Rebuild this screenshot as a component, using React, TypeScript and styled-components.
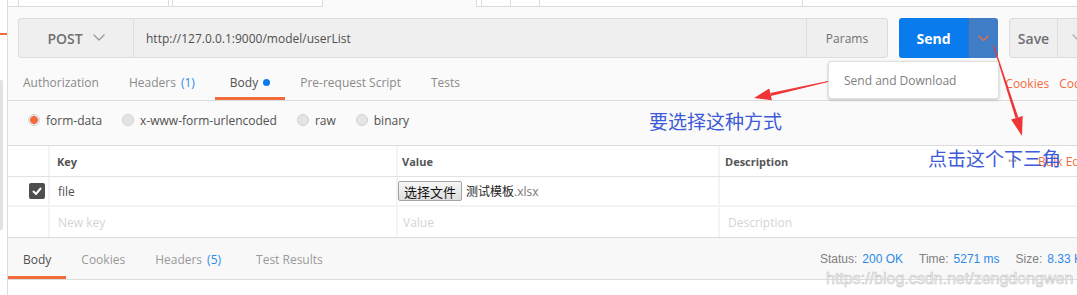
import styled, { createGlobalStyle } from "styled-components";

const ORANGE = "#f26b3a";
const BLUE = "#2b8ae8";
const LINE = "#dcdcdc";
const UI_FONT = `"Open Sans", "Noto Sans CJK SC", sans-serif`;
const CJK_FONT = `"Noto Sans CJK SC", "Noto Sans", sans-serif`;

const GlobalStyle = createGlobalStyle`
    html, body {
        margin: 0;
        padding: 0;
    }
    body {
        background: #fff;
        font-family: ${UI_FONT};
        font-size: 12px;
        color: #505050;
    }
    * {
        box-sizing: border-box;
    }
`;

const stripSegments = [
    { w: 11 },
    { w: 150 },
    { w: 4 },
    { w: 150 },
    { w: 154, active: true },
    { w: 5 },
    { w: 29 },
    { w: 29 },
    { w: 263 },
];

const requestTabs = [
    { label: "Authorization" },
    { label: "Headers", count: "(1)" },
    { label: "Body", active: true, dot: true },
    { label: "Pre-request Script" },
    { label: "Tests" },
];

const bodyModes = [
    { label: "form-data", checked: true },
    { label: "x-www-form-urlencoded" },
    { label: "raw" },
    { label: "binary" },
];

const responseTabs = [
    { label: "Body", active: true },
    { label: "Cookies" },
    { label: "Headers", count: "(5)" },
    { label: "Test Results" },
];

const stats = [
    { label: "Status:", value: "200 OK" },
    { label: "Time:", value: "5271 ms" },
    { label: "Size:", value: "8.33 KB" },
];

function Chevron({ color, size = 12 }: { color: string; size?: number }) {
    return (
        <svg width={size} height={size * 0.6} viewBox="0 0 12 7" fill="none">
            <polyline
                points="1,1 6,6 11,1"
                stroke={color}
                strokeWidth="1.4"
                strokeLinecap="round"
                strokeLinejoin="round"
            />
        </svg>
    );
}

export default function App() {
    return (
        <Page>
            <GlobalStyle />
            <Sidebar>
                <SideMark />
                <SideScroll />
            </Sidebar>
            <Main>
                <Strip>
                    {stripSegments.map((s, i) => (
                        <StripTab key={i} $w={s.w} $active={!!s.active} />
                    ))}
                    <StripFill />
                </Strip>

                <UrlRow>
                    <UrlGroup>
                        <Method>
                            <span>POST</span>
                            <Chevron color="#9a9a9a" />
                        </Method>
                        <UrlInput>http://127.0.0.1:9000/model/userList</UrlInput>
                        <Params>Params</Params>
                    </UrlGroup>
                    <SendGroup>
                        <SendButton>Send</SendButton>
                        <SendDrop>
                            <Chevron color={ORANGE} size={11} />
                        </SendDrop>
                        <Menu>Send and Download</Menu>
                    </SendGroup>
                    <SaveGroup>
                        <SaveButton>Save</SaveButton>
                        <SaveDrop>
                            <Chevron color="#b0b0b0" />
                        </SaveDrop>
                    </SaveGroup>
                </UrlRow>

                <TabsRow>
                    {requestTabs.map(t => (
                        <Tab key={t.label} $active={!!t.active}>
                            {t.label}
                            {t.count && <Count>{t.count}</Count>}
                            {t.dot && <Dot />}
                        </Tab>
                    ))}
                    <RightLinks>
                        <Link>Cookies</Link>
                        <Link>Code</Link>
                    </RightLinks>
                </TabsRow>

                <ModeRow>
                    {bodyModes.map(m => (
                        <Mode key={m.label}>
                            <Radio $checked={!!m.checked} />
                            {m.label}
                        </Mode>
                    ))}
                </ModeRow>

                <Table>
                    <Row $h={31} $line="#e2e2e2" $lineW={1}>
                        <Cell />
                        <Cell $sep $pad={7}><Head>Key</Head></Cell>
                        <Cell $sep $pad={4}><Head>Value</Head></Cell>
                        <Cell $sep $pad={5}>
                            <Head>Description</Head>
                            <HeadTools>
                                <Dots>•••</Dots>
                                <Link>Bulk Edit</Link>
                            </HeadTools>
                        </Cell>
                    </Row>
                    <Row $h={30} $line="#f3f3f3" $lineW={2}>
                        <CheckCell>
                            <CheckBox>
                                <svg width="10" height="8" viewBox="0 0 10 8">
                                    <polyline
                                        points="1,4 4,7 9,1"
                                        fill="none"
                                        stroke="#fff"
                                        strokeWidth="2"
                                    />
                                </svg>
                            </CheckBox>
                        </CheckCell>
                        <Cell $sep $pad={8}>file</Cell>
                        <Cell $sep $pad={0}>
                            <FileButton>选择文件</FileButton>
                            <FileName>
                                测试模板<Ext>.xlsx</Ext>
                            </FileName>
                        </Cell>
                        <Cell $sep $pad={8} />
                    </Row>
                    <Row $h={31} $line={LINE} $lineW={1}>
                        <Cell />
                        <Cell $sep $pad={8}><Placeholder>New key</Placeholder></Cell>
                        <Cell $sep $pad={5}><Placeholder>Value</Placeholder></Cell>
                        <Cell $sep $pad={8}><Placeholder>Description</Placeholder></Cell>
                    </Row>
                </Table>

                <ResponseRow>
                    {responseTabs.map(t => (
                        <RespTab key={t.label} $active={!!t.active}>
                            {t.label}
                            {t.count && <Count>{t.count}</Count>}
                        </RespTab>
                    ))}
                    <Stats>
                        {stats.map(s => (
                            <Stat key={s.label}>
                                {s.label}
                                <StatValue>{s.value}</StatValue>
                            </Stat>
                        ))}
                    </Stats>
                </ResponseRow>
                <Footer />
            </Main>

            <Arrows width="1077" height="295" viewBox="0 0 1077 295">
                <polygon
                    points="827.9,80.9 828.1,82.1 770.9,95.9 770.3,92.9"
                    fill="#ef3535"
                />
                <polygon points="754,98 769.3,88.5 771.9,100.3" fill="#ef3535" />
                <polygon
                    points="993,45.3 994,45 1018.3,117.3 1015.5,118.1"
                    fill="#ef3535"
                />
                <polygon points="1022,136 1011.1,119.4 1022.7,116" fill="#ef3535" />
            </Arrows>
            <Note $x={649} $y={111}>要选择这种方式</Note>
            <Note $x={928} $y={148}>点击这个下三角</Note>
            <Watermark>https://blog.csdn.net/zengdongwen</Watermark>
        </Page>
    );
}

const Page = styled.div`
    position: relative;
    display: flex;
    width: 1077px;
    height: 295px;
    overflow: hidden;
    background: #fff;
`;
const Sidebar = styled.div`
    flex: none;
    width: 8px;
    display: flex;
    flex-direction: column;
    border-right: 1px solid ${LINE};
    background: #fff;
`;
const SideMark = styled.div`
    margin-top: 33px;
    height: 2px;
    background: ${ORANGE};
`;
const SideScroll = styled.div`
    margin-top: 45px;
    width: 3px;
    height: 150px;
    border-radius: 0 2px 2px 0;
    background: #e2e2e2;
`;
const Main = styled.div`
    flex: 1;
    min-width: 0;
    display: flex;
    flex-direction: column;
    background: #fafafa;
`;
const Strip = styled.div`
    height: 18px;
    display: flex;
    align-items: flex-start;
`;
const StripTab = styled.div<{ $w: number; $active: boolean }>`
    flex: none;
    width: ${({ $w }) => $w}px;
    height: 7px;
    border-right: 1px solid ${LINE};
    ${({ $active }) =>
        $active
            ? `background: #fafafa;`
            : `background: #fff; border-bottom: 1px solid ${LINE};`}
`;
const StripFill = styled.div`
    flex: 1;
    height: 7px;
    background: #fff;
    border-bottom: 1px solid ${LINE};
`;
const UrlRow = styled.div`
    height: 40px;
    display: flex;
    padding-left: 10px;
`;
const UrlGroup = styled.div`
    flex: none;
    width: 870px;
    display: flex;
    border: 1px solid ${LINE};
    border-radius: 3px;
    background: #efefef;
`;
const Method = styled.div`
    flex: none;
    width: 115px;
    display: flex;
    align-items: center;
    justify-content: center;
    gap: 10px;
    border-right: 1px solid ${LINE};
    font-size: 14px;
    font-weight: 600;
    color: #707070;
`;
const UrlInput = styled.div`
    flex: 1;
    display: flex;
    align-items: center;
    padding-left: 12px;
    border-right: 1px solid ${LINE};
    font-size: 12px;
    color: #505050;
`;
const Params = styled.div`
    flex: none;
    width: 80px;
    display: flex;
    align-items: center;
    justify-content: center;
    font-size: 12px;
    color: #707070;
`;
const SendGroup = styled.div`
    position: relative;
    flex: none;
    margin-left: 11px;
    display: flex;
    border-radius: 3px;
    overflow: visible;
`;
const SendButton = styled.div`
    width: 69px;
    display: flex;
    align-items: center;
    justify-content: center;
    background: #097bed;
    border-radius: 3px 0 0 3px;
    font-size: 14px;
    font-weight: 700;
    color: #fff;
`;
const SendDrop = styled.div`
    width: 30px;
    display: flex;
    align-items: center;
    justify-content: center;
    background: #3f7dc7;
    border-left: 1px solid #3672b8;
    border-radius: 0 3px 3px 0;
`;
const Menu = styled.div`
    position: absolute;
    top: calc(100% + 3px);
    right: -1px;
    z-index: 2;
    width: 171px;
    height: 38px;
    display: flex;
    align-items: center;
    padding-left: 15px;
    background: #fff;
    border: 1px solid #e0e0e0;
    border-radius: 3px;
    box-shadow: 0 1px 3px rgba(0, 0, 0, 0.22);
    font-size: 12px;
    color: #808080;
    white-space: nowrap;
`;
const SaveGroup = styled.div`
    flex: none;
    width: 90px;
    margin-left: 11px;
    display: flex;
    border: 1px solid ${LINE};
    border-radius: 3px;
    background: #efefef;
`;
const SaveButton = styled.div`
    width: 48px;
    display: flex;
    align-items: center;
    justify-content: center;
    border-right: 1px solid ${LINE};
    font-size: 14px;
    font-weight: 600;
    color: #707070;
`;
const SaveDrop = styled.div`
    flex: 1;
    display: flex;
    align-items: center;
    justify-content: center;
`;
const TabsRow = styled.div`
    height: 43px;
    display: flex;
    border-bottom: 1px solid ${LINE};
`;
const Tab = styled.div<{ $active: boolean }>`
    height: 42px;
    display: flex;
    align-items: center;
    padding: 9px 15px 0;
    border-bottom: 3px solid ${({ $active }) => ($active ? ORANGE : "transparent")};
    font-size: 12px;
    color: ${({ $active }) => ($active ? "#505050" : "#8a8a8a")};
    white-space: nowrap;
`;
const Count = styled.span`
    margin-left: 5px;
    margin-right: 5px;
    color: ${BLUE};
`;
const Dot = styled.span`
    width: 7px;
    height: 7px;
    margin-left: 5px;
    border-radius: 50%;
    background: #097bed;
`;
const RightLinks = styled.div`
    margin-left: auto;
    margin-right: -11px;
    display: flex;
    align-items: center;
    gap: 10px;
    padding-top: 9px;
`;
const Link = styled.span`
    font-size: 12px;
    color: ${ORANGE};
    white-space: nowrap;
`;
const ModeRow = styled.div`
    height: 44px;
    display: flex;
    align-items: center;
    gap: 20px;
    padding: 0 0 6px 20px;
    background: #fafafa;
`;
const Mode = styled.label`
    display: flex;
    align-items: center;
    gap: 6px;
    font-size: 12px;
    color: #505050;
`;
const Radio = styled.span<{ $checked: boolean }>`
    width: 12px;
    height: 12px;
    border-radius: 50%;
    border: 1px solid #d2d2d2;
    background: ${({ $checked }) =>
        $checked
            ? `radial-gradient(circle, ${ORANGE} 0 3.6px, #ececec 4.2px)`
            : "#e4e4e4"};
`;
const Table = styled.div`
    display: flex;
    flex-direction: column;
    border-top: 1px solid ${LINE};
    background: #fff;
`;
const Row = styled.div<{ $h: number; $line: string; $lineW: number }>`
    height: ${({ $h }) => $h}px;
    display: grid;
    grid-template-columns: 40px 348px 322px 1fr;
    border-bottom: ${({ $lineW, $line }) => `${$lineW}px solid ${$line}`};
`;
const Cell = styled.div<{ $sep?: boolean; $pad?: number }>`
    display: flex;
    align-items: center;
    padding-left: ${({ $pad }) => $pad ?? 0}px;
    border-left: ${({ $sep }) => ($sep ? "2px solid #f4f4f4" : "none")};
    font-size: 12px;
    color: #505050;
    white-space: nowrap;
`;
const CheckCell = styled.div`
    display: flex;
    align-items: center;
    justify-content: flex-end;
    padding-right: 3px;
`;
const CheckBox = styled.span`
    width: 16px;
    height: 16px;
    display: flex;
    align-items: center;
    justify-content: center;
    border-radius: 2px;
    background: #4e4e4e;
`;
const Head = styled.span`
    font-size: 11px;
    font-weight: 700;
    color: #555;
`;
const HeadTools = styled.div`
    margin-left: auto;
    margin-right: -10px;
    display: flex;
    align-items: center;
    gap: 22px;
`;
const Dots = styled.span`
    font-size: 10px;
    letter-spacing: -1px;
    color: #a8a8a8;
`;
const FileButton = styled.span`
    height: 20px;
    width: 64px;
    display: flex;
    align-items: center;
    justify-content: center;
    border: 1px solid #a3a3a3;
    border-radius: 2px;
    background: linear-gradient(#f7f7f7, #dedede);
    font-family: ${CJK_FONT};
    font-size: 13px;
    color: #111;
`;
const FileName = styled.span`
    margin-left: 4px;
    font-family: ${CJK_FONT};
    font-size: 12px;
    color: #222;
`;
const Ext = styled.span`
    font-family: ${UI_FONT};
    color: #777;
`;
const Placeholder = styled.span`
    color: #d4d4d4;
`;
const ResponseRow = styled.div`
    height: 42px;
    display: flex;
    border-bottom: 1px solid ${LINE};
    background: #f8f8f8;
`;
const RespTab = styled.div<{ $active: boolean }>`
    height: 41px;
    display: flex;
    align-items: center;
    padding: 4px 15px 0;
    border-bottom: 3px solid ${({ $active }) => ($active ? ORANGE : "transparent")};
    font-size: 12px;
    color: ${({ $active }) => ($active ? "#505050" : "#9a9a9a")};
    white-space: nowrap;
`;
const Stats = styled.div`
    margin-left: auto;
    margin-right: -13px;
    display: flex;
    align-items: center;
    gap: 16px;
    font-family: "Liberation Sans", Arial, sans-serif;
    font-size: 12px;
    color: #808080;
    white-space: nowrap;
`;
const Stat = styled.span`
    display: flex;
    gap: 5px;
`;
const StatValue = styled.span`
    color: ${BLUE};
`;
const Footer = styled.div`
    flex: 1;
    background: #fff;
`;
const Arrows = styled.svg`
    position: absolute;
    top: 0;
    left: 0;
    pointer-events: none;
`;
const Note = styled.span<{ $x: number; $y: number }>`
    position: absolute;
    left: ${({ $x }) => $x}px;
    top: ${({ $y }) => $y}px;
    font-family: ${CJK_FONT};
    font-size: 19px;
    line-height: 1;
    color: #3d5bd9;
    white-space: nowrap;
`;
const Watermark = styled.span`
    position: absolute;
    left: 826px;
    top: 271px;
    font-family: "Liberation Sans", Arial, sans-serif;
    font-size: 16px;
    line-height: 16px;
    color: rgba(255, 255, 255, 0.7);
    -webkit-text-stroke: 0.6px #c4c4c4;
    white-space: nowrap;
`;
